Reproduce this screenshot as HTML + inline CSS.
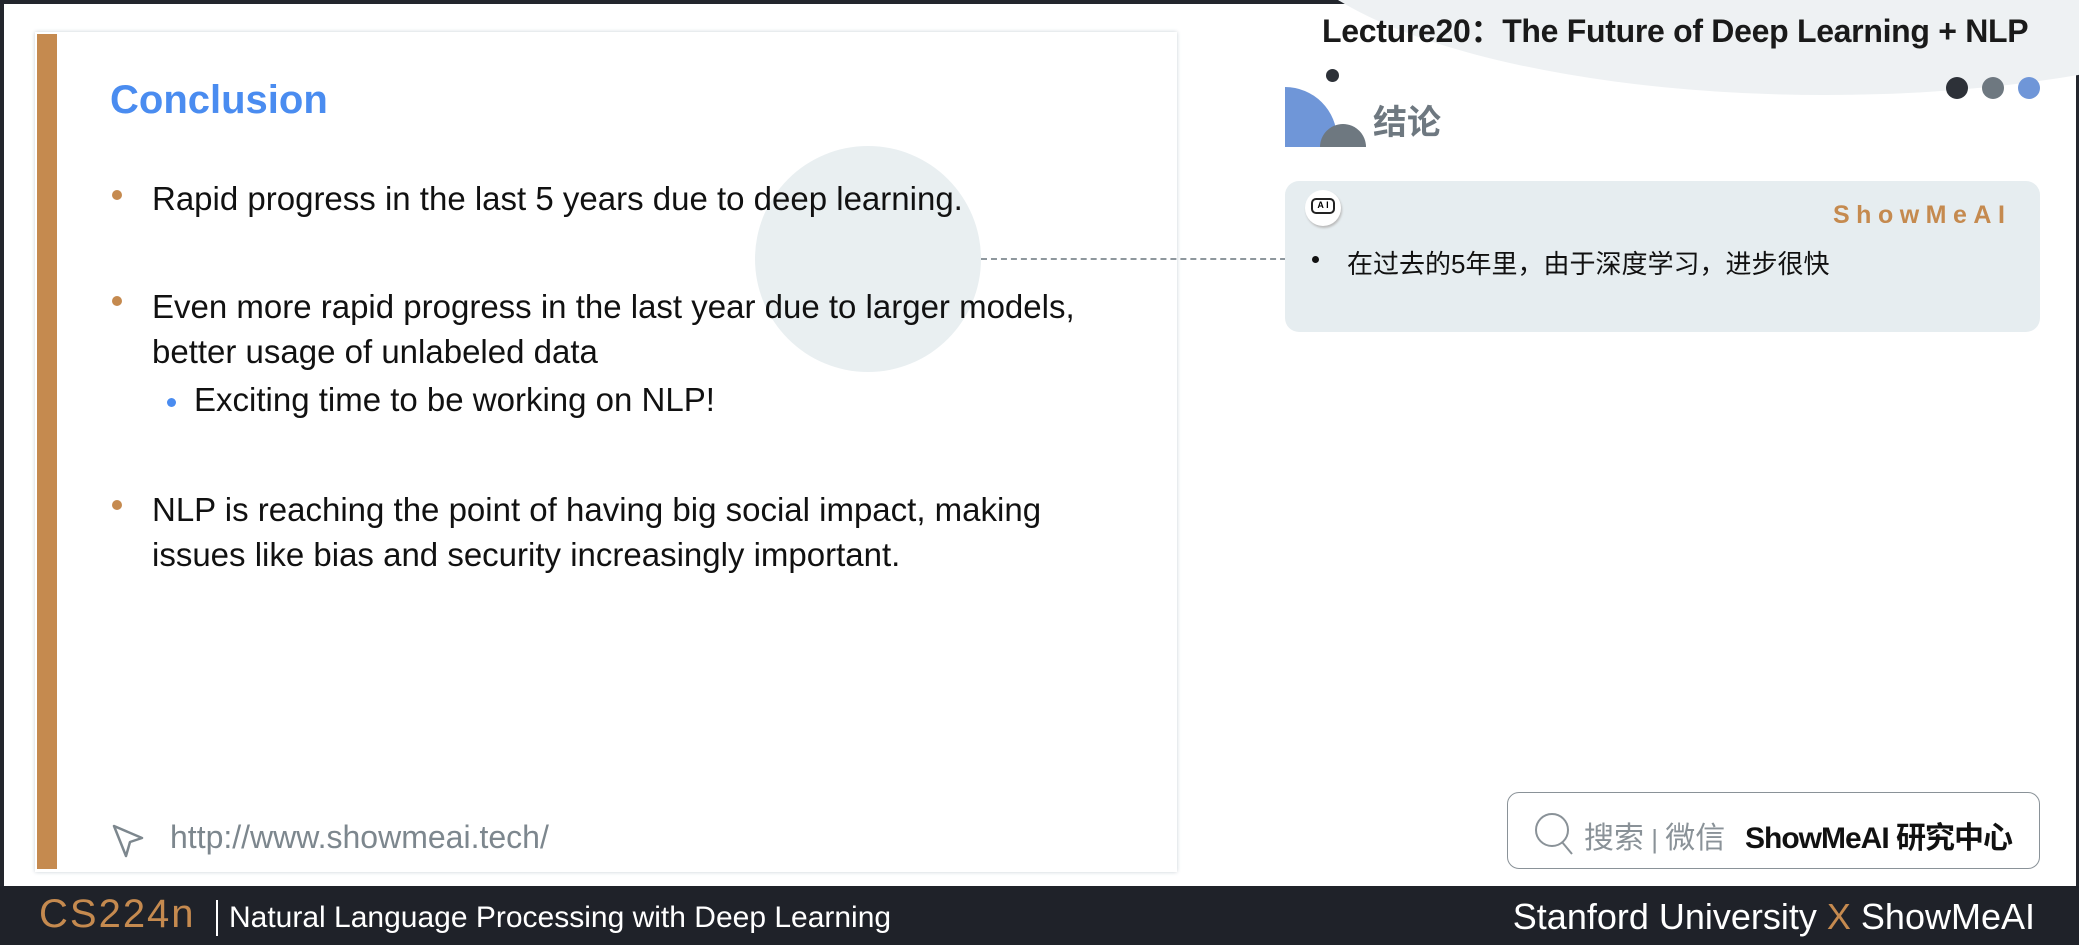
<!DOCTYPE html>
<html><head><meta charset="utf-8"><style>
*{margin:0;padding:0;box-sizing:border-box}
body{width:2079px;height:945px;position:relative;overflow:hidden;background:#fff;font-family:"Liberation Sans","Noto Sans CJK SC",sans-serif;}
.a{position:absolute;white-space:nowrap}
</style></head><body>
<div class="a" style="left:0;top:0;width:2079px;height:4px;background:#23262d"></div>
<div class="a" style="left:0;top:0;width:4px;height:945px;background:#23262d"></div>
<div class="a" style="right:0;top:0;width:3px;height:945px;background:#23262d"></div>
<!-- top right gray arc -->
<div class="a" style="left:1275px;top:-260px;width:1100px;height:355px;border-radius:50%;background:#eef1f3"></div>
<!-- slide card -->
<div class="a" style="left:35px;top:32px;width:1142px;height:840px;background:#fff;box-shadow:0 0 4px #c8d0d6"></div>
<div class="a" style="left:37px;top:34px;width:20px;height:835px;background:#c58a4f"></div>
<div class="a" style="left:755px;top:146px;width:226px;height:226px;border-radius:50%;background:#e9eff1"></div>
<div class="a" style="left:981px;top:258px;width:325px;border-top:2px dashed #8e979d"></div>
<div class="a" style="left:110px;top:78px;font-size:40px;font-weight:bold;color:#4a8cf0">Conclusion</div>
<div class="a" style="left:112px;top:190px;width:10px;height:10px;border-radius:50%;background:#c58a4f"></div>
<div class="a" style="left:152px;top:180px;font-size:33px;color:#111">Rapid progress in the last 5 years due to deep learning.</div>
<div class="a" style="left:112px;top:296px;width:10px;height:10px;border-radius:50%;background:#c58a4f"></div>
<div class="a" style="left:152px;top:284px;font-size:33px;color:#111;line-height:45px">Even more rapid progress in the last year due to larger models,<br>better usage of unlabeled data</div>
<div class="a" style="left:167px;top:398px;width:9px;height:9px;border-radius:50%;background:#4a8cf0"></div>
<div class="a" style="left:194px;top:381px;font-size:33px;color:#111">Exciting time to be working on NLP!</div>
<div class="a" style="left:112px;top:500px;width:10px;height:10px;border-radius:50%;background:#c58a4f"></div>
<div class="a" style="left:152px;top:487px;font-size:33px;color:#111;line-height:45px">NLP is reaching the point of having big social impact, making<br>issues like bias and security increasingly important.</div>
<svg class="a" style="left:108px;top:818px" width="46" height="46" viewBox="0 0 46 46"><path d="M6 8 L34 20 L22 24 L18 38 Z" fill="none" stroke="#7d878e" stroke-width="2.5" stroke-linejoin="round"/></svg>
<div class="a" style="left:170px;top:819px;font-size:32px;color:#7d878e">http://www.showmeai.tech/</div>
<!-- right -->
<div class="a" style="left:1322px;top:6px;font-size:32px;font-weight:bold;color:#1a1a1a;letter-spacing:-0.3px">Lecture20：The Future of Deep Learning + NLP</div>
<div class="a" style="left:1946px;top:77px;width:22px;height:22px;border-radius:50%;background:#2d3138"></div>
<div class="a" style="left:1982px;top:77px;width:22px;height:22px;border-radius:50%;background:#6e7880"></div>
<div class="a" style="left:2018px;top:77px;width:22px;height:22px;border-radius:50%;background:#6f96d8"></div>
<div class="a" style="left:1326px;top:69px;width:13px;height:13px;border-radius:50%;background:#2d3138"></div>
<div class="a" style="left:1285px;top:87px;width:52px;height:60px;border-radius:0 52px 0 0;background:#6f96d8"></div>
<div class="a" style="left:1320px;top:124px;width:46px;height:23px;border-radius:23px 23px 0 0;background:#6e7880"></div>
<div class="a" style="left:1373px;top:95px;font-size:34px;font-weight:bold;color:#6e7880">结论</div>
<div class="a" style="left:1285px;top:181px;width:755px;height:151px;border-radius:14px;background:#e6edf0"></div>
<div class="a" style="left:1305px;top:190px;width:36px;height:36px;border-radius:50%;background:#fff;box-shadow:1px 2px 2px #bbb"></div>
<div class="a" style="left:1311px;top:198px;width:24px;height:16px;border:2.5px solid #222;border-radius:5px;font-size:9px;line-height:11px;text-align:center;font-weight:bold">A I</div>
<div class="a" style="left:1833px;top:201px;font-size:25px;font-weight:bold;color:#c58a4f;letter-spacing:6.5px">ShowMeAI</div>
<div class="a" style="left:1312px;top:256px;width:7px;height:7px;border-radius:50%;background:#111"></div>
<div class="a" style="left:1347px;top:244px;font-size:26px;color:#111">在过去的5年里，由于深度学习，进步很快</div>
<div class="a" style="left:1507px;top:792px;width:533px;height:77px;border:1.5px solid #8a9298;border-radius:12px"></div>
<svg class="a" style="left:1530px;top:808px" width="50" height="50" viewBox="0 0 50 50"><circle cx="22" cy="22" r="16" fill="none" stroke="#8a9298" stroke-width="2"/><path d="M32 34 L42 46" stroke="#8a9298" stroke-width="2"/></svg>
<div class="a" style="left:1584px;top:813px;font-size:30px;color:#8a9298">搜索<span style="font-size:26px"> | </span>微信</div>
<div class="a" style="left:1745px;top:813px;font-size:30px;font-weight:bold;color:#111;letter-spacing:-1px">ShowMeAI 研究中心</div>
<!-- footer -->
<div class="a" style="left:0;top:886px;width:2079px;height:59px;background:#1f2229"></div>
<div class="a" style="left:39px;top:892px;font-size:40px;color:#c58a4f;letter-spacing:2px">CS224n</div>
<div class="a" style="left:216px;top:900px;width:2px;height:36px;background:#fff"></div>
<div class="a" style="left:229px;top:901px;font-size:30px;color:#fff">Natural Language Processing with Deep Learning</div>
<div class="a" style="right:44px;top:896px;font-size:36px;color:#fff">Stanford University <span style="color:#c58a4f">X</span> ShowMeAI</div>
</body></html>
